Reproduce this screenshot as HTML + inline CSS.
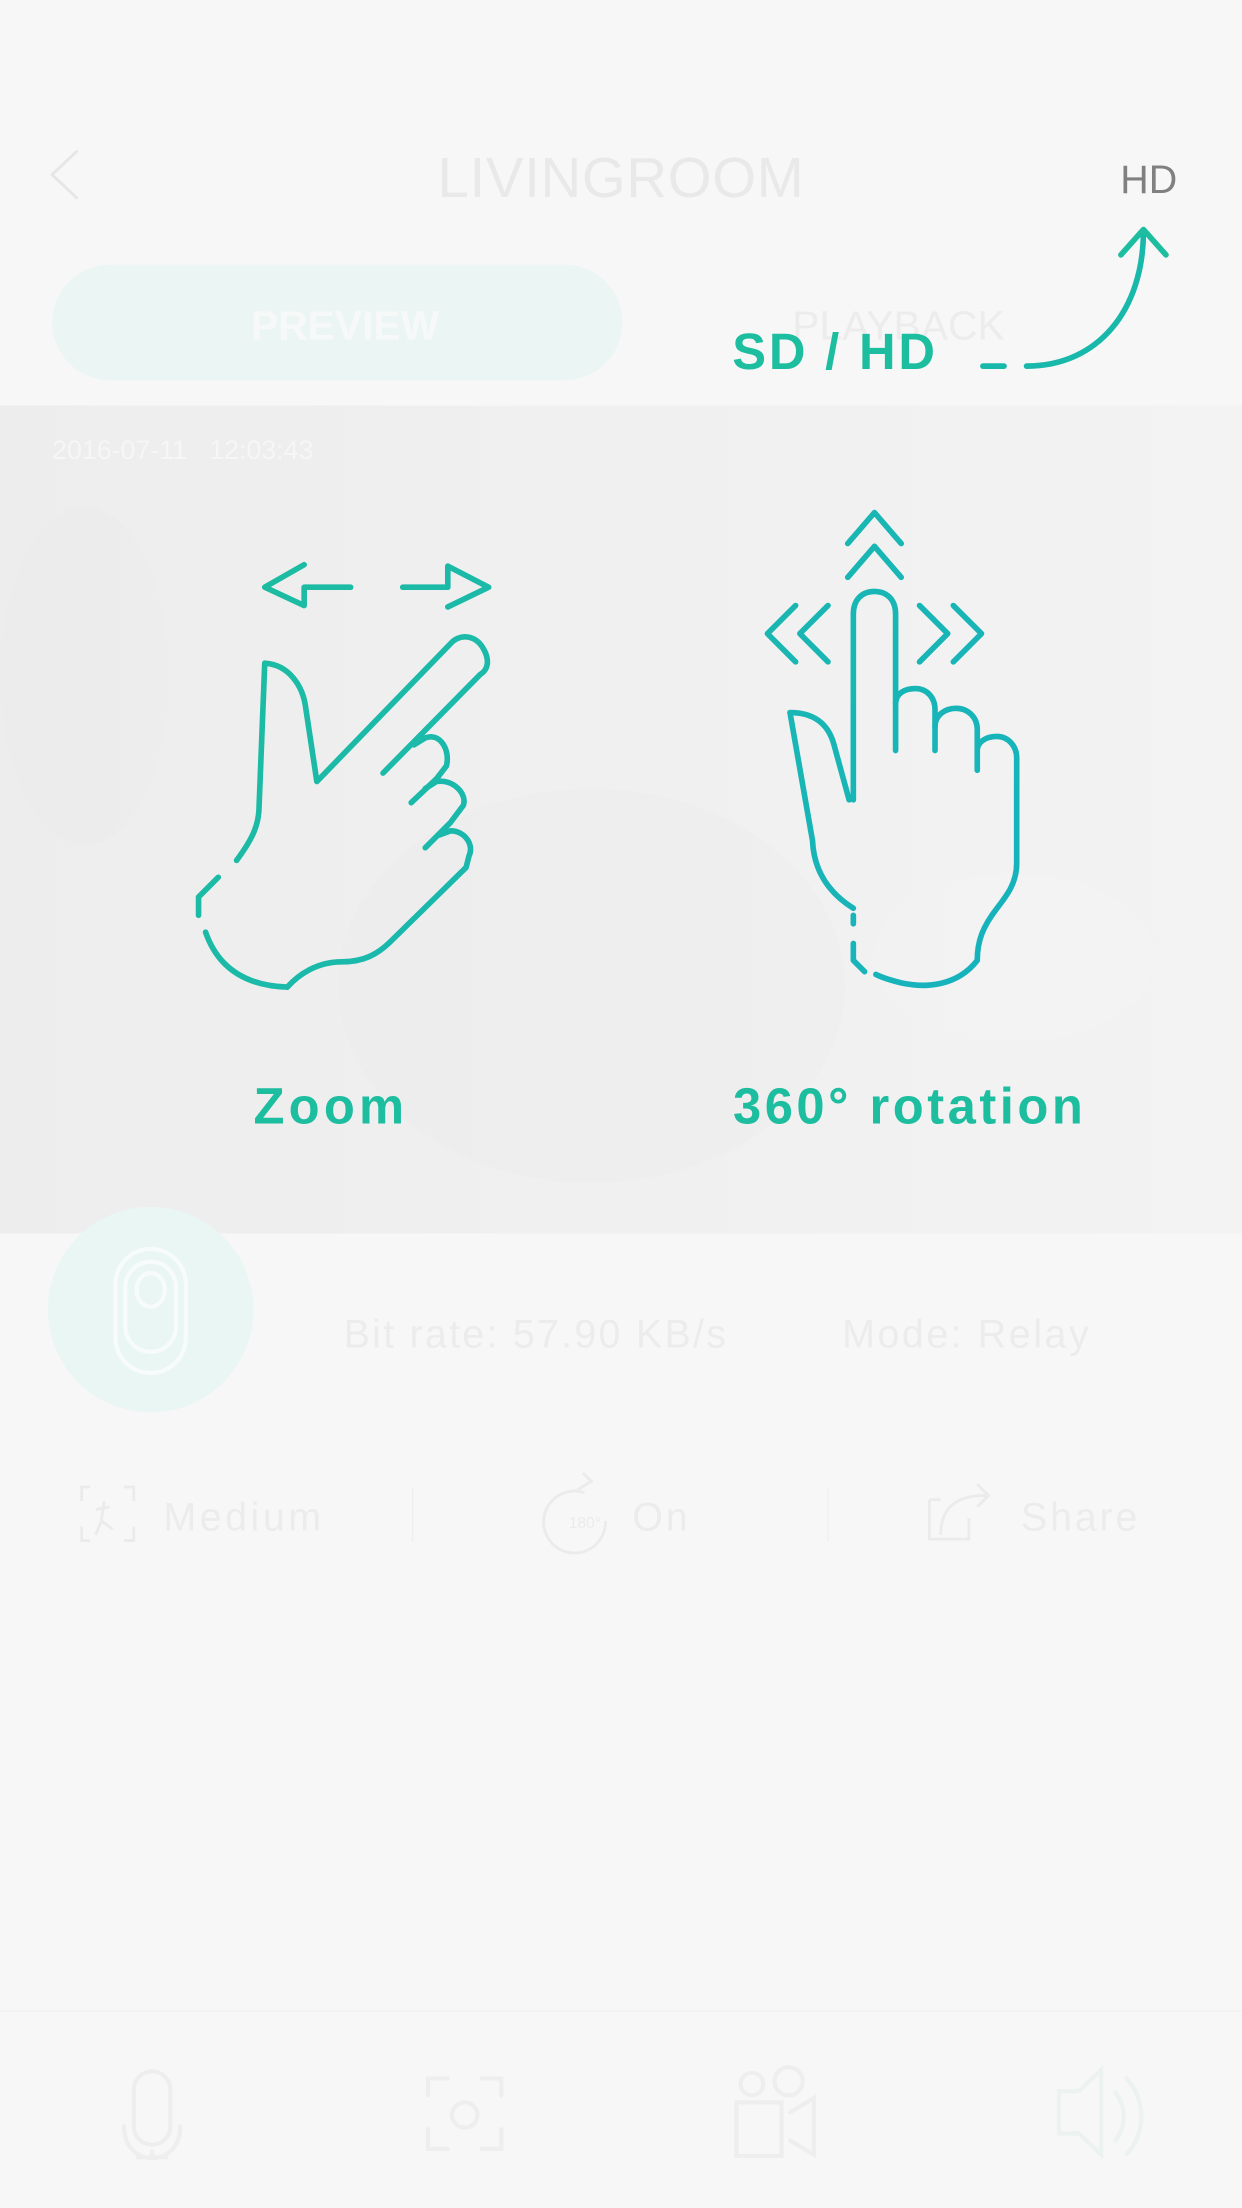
<!DOCTYPE html>
<html><head><meta charset="utf-8"><style>
html,body{margin:0;padding:0;background:#f7f7f7;}
svg{display:block;}
</style></head><body>
<svg width="1242" height="2208" viewBox="0 0 882 1568" xmlns="http://www.w3.org/2000/svg" font-family="Liberation Sans, sans-serif">
<defs>
<linearGradient id="tg" gradientUnits="userSpaceOnUse" x1="140" y1="360" x2="730" y2="700"><stop offset="0" stop-color="#1dbd9f"/><stop offset="1" stop-color="#16b2bf"/></linearGradient>
<linearGradient id="vid" x1="0" y1="0" x2="1" y2="0"><stop offset="0" stop-color="#ededed"/><stop offset="0.5" stop-color="#f0f0f0"/><stop offset="1" stop-color="#f3f3f3"/></linearGradient>
</defs>
<rect width="882" height="1568" fill="#f7f7f7"/>
<!-- header -->
<path d="M55 107 L37 124 L55 141" fill="none" stroke="#e6e6e6" stroke-width="2"/>
<text x="441" y="140" font-size="40" fill="#e9e9e9" text-anchor="middle" letter-spacing="0.5">LIVINGROOM</text>
<text x="836" y="137" font-size="28" fill="#808080" text-anchor="end">HD</text>
<!-- tabs -->
<rect x="37" y="188" width="405" height="82" rx="41" fill="#ebf5f3"/>
<text x="245" y="241" font-size="29" font-weight="bold" fill="#f7f9f9" text-anchor="middle">PREVIEW</text>
<text x="638" y="241" font-size="29" fill="#ececec" text-anchor="middle">PLAYBACK</text>
<!-- video -->
<rect x="0" y="288" width="882" height="588" fill="url(#vid)"/>
<ellipse cx="420" cy="700" rx="180" ry="140" fill="#ebebeb" opacity="0.35"/>
<ellipse cx="720" cy="680" rx="100" ry="60" fill="#f3f3f3" opacity="0.6"/>
<ellipse cx="60" cy="480" rx="60" ry="120" fill="#eaeaea" opacity="0.3"/>
<text x="37" y="326" font-size="19" fill="#f6f6f6">2016-07-11&#160;&#160;&#160;12:03:43</text>
<!-- SD/HD annotation -->
<text x="520" y="262" font-size="36" font-weight="bold" fill="#1dbd9f" letter-spacing="2">SD / HD</text>
<path d="M698 260 L713 260" stroke="#18b8ab" stroke-width="4" stroke-linecap="round"/>
<path d="M729 260 C780 260 812 220 812 164" fill="none" stroke="#18b8ab" stroke-width="4" stroke-linecap="round"/>
<path d="M796 181 L812 163 L828 181" fill="none" stroke="#1dbd9f" stroke-width="4" stroke-linecap="round" stroke-linejoin="round"/>
<!-- zoom hand -->
<g fill="none" stroke="url(#tg)" stroke-width="4" stroke-linecap="round" stroke-linejoin="round">
<path d="M216 401 L188 417 L216 430 L216 417 L249 417"/>
<path d="M286 417 L318 417 L318 402 L347 417 L318 431"/>
<path d="M168 611 C180 595 184 585 184 572 L188 471 C205 472 215 487 217 502 L225 555 L320 457 C326 450 338 450 344 462 C348 470 346 476 341 479 L272 549"/>
<path d="M294 529 L302 524 C312 520 320 532 317 544 L310 553 L292 570"/>
<path d="M302 560 L310 555 C322 553 332 564 329 572 L320 584 L302 602"/>
<path d="M312 593 L320 590 C330 590 337 600 333 608 L331 616 L278 668 C268 678 258 683 243 683 C225 683 212 692 204 701"/>
<path d="M204 701 C175 700 155 688 146 662"/>
<path d="M141 650 L141 637 L155 623"/>
</g>
<!-- rotation hand -->
<g fill="none" stroke="url(#tg)" stroke-width="4" stroke-linecap="round" stroke-linejoin="round">
<path d="M602 386 L621 364 L640 386"/>
<path d="M602 410 L621 388 L640 410"/>
<path d="M565 430 L545 450 L565 470"/>
<path d="M588 430 L568 450 L588 470"/>
<path d="M653 430 L673 450 L653 470"/>
<path d="M677 430 L697 450 L677 470"/>
<path d="M606 568 L606 436 C606 426 612 420 621 420 C630 420 636 426 636 436 L636 533"/>
<path d="M636 500 C636 492 643 489 650 489 C658 489 664 495 664 504 L664 533"/>
<path d="M664 516 C664 508 671 503 679 503 C687 503 694 509 694 518 L694 547"/>
<path d="M694 532 C695 526 701 523 708 523 C716 523 722 530 722 538 L722 613 C722 627 715 636 708 645 C698 658 694 668 694 682 C680 700 658 702 640 698 C632 696 626 694 622 692"/>
<path d="M603 568 L592 528 C588 514 578 506 561 506 L577 597 C578 620 590 635 606 645"/>
<path d="M606 650 L606 656"/>
<path d="M606 670 L606 682 L614 690"/>
</g>
<text x="235" y="798" font-size="36" font-weight="bold" fill="#1dbd9f" text-anchor="middle" letter-spacing="3">Zoom</text>
<text x="646" y="798" font-size="36" font-weight="bold" fill="#1dbd9f" text-anchor="middle" letter-spacing="2.5">360° rotation</text>
<!-- mic circle -->
<circle cx="107" cy="930" r="73" fill="#e9f6f4"/>
<g fill="none" stroke="#f7fbfa" stroke-width="3">
<rect x="82" y="887" width="50" height="88" rx="25"/>
<rect x="89" y="896" width="36" height="64" rx="18"/>
<ellipse cx="107" cy="916" rx="10" ry="12"/>
</g>
<text x="244" y="957" font-size="28" fill="#ececec" letter-spacing="1.6">Bit rate: 57.90 KB/s</text>
<text x="598" y="957" font-size="28" fill="#ececec" letter-spacing="1.8">Mode: Relay</text>
<!-- options row -->
<g fill="none" stroke="#ebebeb" stroke-width="2">
<path d="M58 1066 V1056 H64 M88 1056 H95 V1066 M58 1084 V1094 H64 M88 1094 H95 V1084"/>
<path d="M74 1066 L72 1080 L68 1090 M72 1080 L80 1086 M68 1072 L78 1070"/>
<path d="M415 1060 A22 22 0 1 0 430 1080"/>
<path d="M410 1058 L420 1052 L414 1046"/>
<path d="M660 1065 H668 M660 1065 V1093 H688 V1078 M668 1090 C668 1070 680 1062 700 1062 M694 1054 L702 1062 L694 1070"/>
</g>
<text x="404" y="1085" font-size="11" fill="#ebebeb">180°</text>
<text x="116" y="1087" font-size="28" fill="#ececec" letter-spacing="2.5">Medium</text>
<text x="449" y="1087" font-size="28" fill="#ececec" letter-spacing="2">On</text>
<text x="725" y="1087" font-size="28" fill="#ececec" letter-spacing="2">Share</text>
<line x1="293" y1="1057" x2="293" y2="1095" stroke="#efefef" stroke-width="1"/>
<line x1="588" y1="1057" x2="588" y2="1095" stroke="#efefef" stroke-width="1"/>
<!-- bottom bar -->
<line x1="0" y1="1428" x2="882" y2="1428" stroke="#f2f2f2" stroke-width="1"/>
<g fill="none" stroke="#eeeeee" stroke-width="3" stroke-linecap="round">
<rect x="95" y="1471" width="26" height="52" rx="13"/>
<path d="M88 1510 C88 1540 128 1540 128 1510 M108 1532 V1528 M98 1532 H118"/>
<path d="M304 1488 V1476 H318 M342 1476 H356 V1488 M304 1512 V1526 H318 M342 1526 H356 V1512"/>
<circle cx="330" cy="1502" r="9"/>
<rect x="523" y="1493" width="32" height="38"/>
<path d="M561 1500 L578 1490 V1530 L561 1520"/>
<circle cx="534" cy="1480" r="8"/>
<circle cx="560" cy="1478" r="10"/>
<path d="M752 1485 H766 L782 1470 V1530 L766 1515 H752 Z" stroke="#ebf2f0"/>
<path d="M792 1486 C800 1496 800 1510 792 1520 M800 1476 C814 1492 814 1514 800 1530" stroke="#ebf2f0"/>
</g>
</svg>
</body></html>
